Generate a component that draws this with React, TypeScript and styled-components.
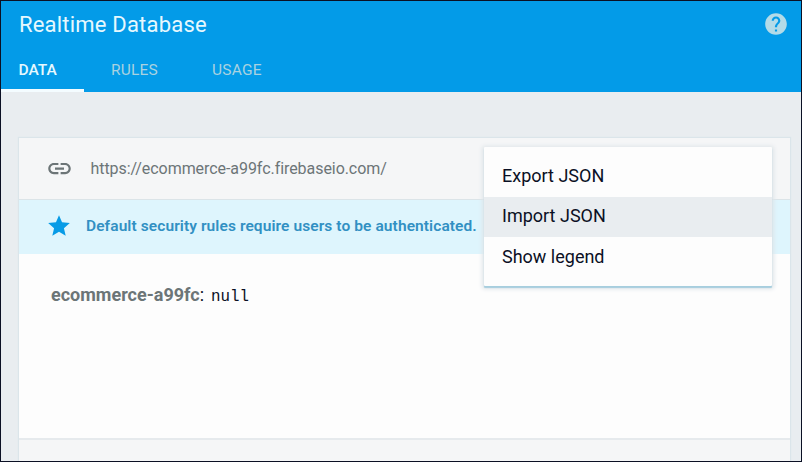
import React from "react";
import styled, { createGlobalStyle } from "styled-components";
import { MdHelp, MdLink, MdStar } from "react-icons/md";

const GlobalStyle = createGlobalStyle`
  * { box-sizing: border-box; }
  body { margin: 0; font-family: Roboto, sans-serif; }
`;

const Page = styled.div`
  display: flex;
  flex-direction: column;
  width: 802px;
  height: 462px;
  border: 1px solid #0b1024;
  background: #e9edf0;
  overflow: hidden;
`;

const Header = styled.header`
  display: flex;
  flex-direction: column;
  justify-content: space-between;
  flex: none;
  height: 91px;
  background: #039be8;
`;

const TitleBar = styled.div`
  display: flex;
  align-items: center;
  justify-content: space-between;
  height: 46px;
  padding: 0 12px 0 18px;
`;

const Title = styled.h1`
  margin: 0;
  padding-top: 2px;
  font-size: 22px;
  line-height: 26px;
  font-weight: 400;
  letter-spacing: 0.2px;
  color: #e6f8fe;
`;

const HelpIcon = styled(MdHelp)`
  width: 26px;
  height: 26px;
  color: #b3dbe8;
`;

const Tabs = styled.nav`
  display: flex;
  height: 45px;
`;

const Tab = styled.button<{ $active?: boolean; $width: number; $inset: number }>`
  width: ${(p) => p.$width}px;
  padding: 3px 0 0 ${(p) => p.$inset}px;
  border: 0;
  border-bottom: 3px solid ${(p) => (p.$active ? "#f4fcff" : "transparent")};
  background: none;
  font: ${(p) => (p.$active ? 500 : 400)} 15.5px/20px Roboto, sans-serif;
  letter-spacing: ${(p) => (p.$active ? 0 : 0.2)}px;
  text-align: left;
  color: ${(p) => (p.$active ? "#e6f8fe" : "#a9d2e0")};
`;

const Card = styled.main`
  position: relative;
  display: flex;
  flex-direction: column;
  flex: 1;
  margin: 46px 11px 0 18px;
  background: #fdfdfd;
  box-shadow: 0 0 1px 1px #dbe5ea;
`;

const UrlRow = styled.div`
  display: flex;
  align-items: center;
  flex: none;
  height: 62px;
  padding-left: 27px;
  border-bottom: 1px solid #dbe4e8;
  background: #f5f6f7;
`;

const LinkIcon = styled(MdLink)`
  width: 27px;
  height: 27px;
  color: #6c7577;
`;

const Url = styled.span`
  margin-left: 17.5px;
  font-size: 16px;
  letter-spacing: -0.06px;
  color: #6c7577;
`;

const Notice = styled.div`
  display: flex;
  align-items: center;
  flex: none;
  height: 54px;
  padding: 0 0 2px 27px;
  background: #def5fd;
`;

const StarIcon = styled(MdStar)`
  width: 26px;
  height: 26px;
  color: #079be6;
`;

const NoticeText = styled.span`
  margin-left: 14px;
  font-size: 15.5px;
  font-weight: 600;
  letter-spacing: 0.09px;
  color: #3190c3;
`;

const Tree = styled.div`
  display: flex;
  align-items: baseline;
  flex: 1;
  padding: 30px 0 0 32px;
  font-size: 18px;
  line-height: 22px;
  color: #0b1024;
`;

const NodeKey = styled.strong`
  font-weight: 700;
  color: #6c7577;
`;

const NodeValue = styled.code`
  margin-left: 7px;
  font: 15.8px "Liberation Mono", monospace;
`;

const Footer = styled.footer`
  flex: none;
  height: 23px;
  border-top: 2px solid #e6eaed;
  background: #f5f6f7;
`;

const Menu = styled.ul`
  position: absolute;
  top: 9px;
  left: 465px;
  width: 288px;
  height: 139px;
  margin: 0;
  padding: 9px 0;
  list-style: none;
  background: #fdfdfd;
  border-radius: 1px;
  box-shadow: 0 2px 1px #a7cede, 0 1px 4px 2px #dfe5e9;
`;

const MenuItem = styled.li<{ $selected?: boolean }>`
  display: flex;
  align-items: center;
  height: 40.5px;
  padding: 0 0 2px 18px;
  font-size: 18px;
  color: #0b1024;
  background: ${(p) => (p.$selected ? "#e9edf0" : "transparent")};
`;

export default function App() {
  return (
    <>
      <GlobalStyle />
      <Page>
        <Header>
          <TitleBar>
            <Title>Realtime Database</Title>
            <HelpIcon />
          </TitleBar>
          <Tabs>
            <Tab $active $width={83} $inset={17.5}>DATA</Tab>
            <Tab $width={110} $inset={27}>RULES</Tab>
            <Tab $width={90} $inset={18}>USAGE</Tab>
          </Tabs>
        </Header>
        <Card>
          <UrlRow>
            <LinkIcon />
            <Url>https://ecommerce-a99fc.firebaseio.com/</Url>
          </UrlRow>
          <Notice>
            <StarIcon />
            <NoticeText>Default security rules require users to be authenticated.</NoticeText>
          </Notice>
          <Tree>
            <NodeKey>ecommerce-a99fc</NodeKey>:<NodeValue>null</NodeValue>
          </Tree>
          <Footer />
          <Menu>
            <MenuItem>Export JSON</MenuItem>
            <MenuItem $selected>Import JSON</MenuItem>
            <MenuItem>Show legend</MenuItem>
          </Menu>
        </Card>
      </Page>
    </>
  );
}
